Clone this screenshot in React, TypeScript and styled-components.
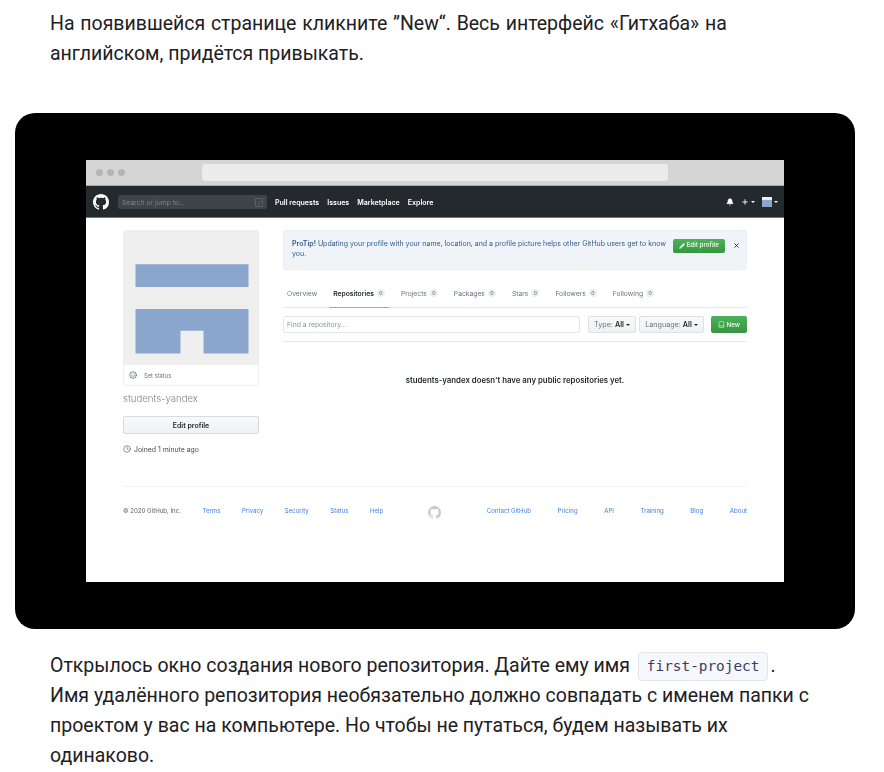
import React from "react";
import styled, { createGlobalStyle } from "styled-components";
import { Bell, Clock, Pencil, Plus, Smile, X, Book } from "lucide-react";

const Global = createGlobalStyle`
  html, body { margin: 0; background: #fff; }
  body { font-family: Roboto, "Noto Sans", sans-serif; color: #21201f; overflow: hidden; }
`;
const Page = styled.div`width: 884px; height: 772px; overflow: hidden; padding-top: 9px; box-sizing: border-box;`;
const Para = styled.p`
  margin: 0; padding: 0 50px; font-size: 19.5px; line-height: 30px; color: #21201f;
  font-family: Roboto, sans-serif; white-space: nowrap;
`;
const Lead = styled.span`word-spacing: 0.9px;`;
const Code = styled.code`
  display: inline-block; height: 29px; line-height: 27px; box-sizing: border-box; padding: 0 8px; margin: 0 2px 0 3px;
  font: 14.4px/27px "DejaVu Sans Mono", monospace; color: #3b3f5c; background: #f6f8fb;
  border: 1px solid #e0e5ee; border-radius: 4px; vertical-align: middle;
`;
const Card = styled.div`
  width: 840px; height: 516px; margin: 44px 0 22px 15px; background: #000; border-radius: 20px;
  padding: 47px 71px; box-sizing: border-box;
`;
const Shot = styled.div`
  width: 698px; height: 422px; background: #fff; overflow: hidden; filter: blur(0.5px);
  font-family: Inter, "Liberation Sans", sans-serif; font-size: 7px; color: #24292e;
`;
const Chrome = styled.div`
  height: 26px; box-sizing: border-box; background: #d5d5d5; border-bottom: 1px solid #a9a9a9;
  display: flex; align-items: center; padding: 0 0 0 9.5px;
`;
const Dots = styled.div`display: flex; gap: 3.5px; width: 106px;`;
const Dot = styled.span`width: 7.5px; height: 7.5px; border-radius: 50%; background: #b5b5b5;`;
const Url = styled.div`width: 466px; height: 17px; background: #ececec; border-radius: 3px;`;
const Nav = styled.div`
  height: 32px; box-sizing: border-box; background: #24292e; border-bottom: 1px solid #75787b;
  display: flex; align-items: center; padding: 1px 0 0 7px; color: #fff;
`;
const Logo = styled.svg`width: 16px; height: 16px; fill: ${(p: { $c: string }) => p.$c}; flex: none;`;
const Search = styled.div`
  width: 149px; height: 14px; margin-left: 9px; background: #3f4448; border-radius: 2px; box-sizing: border-box;
  display: flex; align-items: center; justify-content: space-between; padding: 0 4px; color: #7f8488; font-size: 6.8px;
`;
const Slash = styled.span`width: 8px; height: 9px; border: 1px solid #5c6165; border-radius: 1px; font-size: 5px; line-height: 8px; text-align: center; box-sizing: border-box;`;
const NavLinks = styled.div`display: flex; gap: 8px; margin-left: 8px; font-weight: 600; font-size: 7.05px; white-space: nowrap;`;
const NavRight = styled.div`margin-left: auto; display: flex; align-items: center; padding-right: 6px;`;
const Caret = styled.span`
  width: 0; height: 0; border: 2px solid transparent; border-top-color: ${(p: { $c?: string }) => p.$c || "#fff"}; border-bottom: 0;
  display: inline-block; margin-left: 2px; vertical-align: middle;
`;
const MiniAvatar = styled.span`
  width: 10px; height: 10px; margin-left: 7px; background: #8aa6cd; display: flex; flex-direction: column; justify-content: space-between;
  &::before { content: ""; height: 3px; background: #e9edf3; }
  &::after { content: ""; height: 1px; background: #8aa6cd; }
`;
const Body = styled.div`padding: 12px 37px 0; display: grid; grid-template-columns: 136px 464px; column-gap: 24px;`;
const Side = styled.div`display: flex; flex-direction: column; height: 256px;`;
const AvatarBox = styled.div`border: 1px solid #efefef; border-radius: 2px; overflow: hidden;`;
const Identicon = styled.svg`display: block; width: 134px; height: 134px;`;
const StatusRow = styled.div`height: 20px; display: flex; align-items: center; gap: 7px; padding-left: 5px; color: #6a737d; font-size: 5.8px; box-sizing: border-box;`;
const Username = styled.div`margin-top: 6px; font-size: 9.6px; line-height: 14px; font-weight: 300; color: #7d848b;`;
const EditBtn = styled.div`
  margin-top: 10px; height: 18px; border: 1px solid #d9dbde; border-radius: 2px; background: linear-gradient(#f8f9fa, #eff1f3);
  display: flex; align-items: center; justify-content: center; font-weight: 600; font-size: 7px; box-sizing: border-box;
`;
const Joined = styled.div`margin-top: 10.5px; display: flex; align-items: center; gap: 3px; font-size: 6.9px; color: #444d56;`;
const Main = styled.div`display: flex; flex-direction: column;`;
const Tip = styled.div`
  height: 39.5px; box-sizing: border-box; border: 1px solid #e7eff8; border-radius: 2px; background: #f0f4f9; color: #2f5a8c;
  padding: 7.5px 8px 0; display: flex; justify-content: space-between; line-height: 10.5px; font-size: 7px;
`;
const TipText = styled.div`width: 376px; flex: none; strong { font-weight: 600; }`;
const TipActions = styled.div`display: flex; align-items: flex-start; gap: 8px; color: #24292e;`;
const GreenBtn = styled.div`
  display: flex; align-items: center; justify-content: center; gap: 1.5px; color: #e4f5e6; font-weight: 600; font-size: 6.2px;
  background: linear-gradient(#4cb25a, #36963f); border-radius: 2px; box-sizing: border-box;
  width: ${(p: { $w: number; $h: number }) => p.$w}px; height: ${(p: { $w: number; $h: number }) => p.$h}px;
`;
const Tabs = styled.div`margin-top: 0; display: flex; gap: 8px; align-items: flex-end; border-bottom: 1px solid #e7e8ea; box-sizing: border-box; height: 38.5px;`;
const Tab = styled.div<{ $on?: boolean }>`
  height: 27px; padding: 0 4px 2px; box-sizing: border-box; display: flex; align-items: center; gap: 3px; margin-bottom: -1px;
  color: ${(p) => (p.$on ? "#24292e" : "#6a737d")}; font-weight: ${(p) => (p.$on ? 600 : 400)}; font-size: 6.75px;
  border-bottom: 1.5px solid ${(p) => (p.$on ? "#e2946b" : "transparent")}; white-space: nowrap;
`;
const Count = styled.span`min-width: 8px; height: 8px; border-radius: 4px; background: #eceef0; font-size: 5.2px; line-height: 8px; text-align: center; color: #586069; font-weight: 400;`;
const Filter = styled.div`
  height: 34px; display: flex; align-items: center; box-sizing: border-box; border-bottom: 1px solid #e7e8ea; padding-bottom: 0;
`;
const Find = styled.div`
  width: 297px; height: 17px; margin-right: 8px; box-sizing: border-box; border: 1px solid #e6e7e9; border-radius: 2px;
  color: #8d949b; font-size: 6.8px; line-height: 15px; padding-left: 3px;
`;
const Select = styled.div`
  width: ${(p: { $w: number }) => p.$w}px; height: 17px; box-sizing: border-box; border: 1px solid #dfe1e4; border-radius: 2px; margin-right: 3px;
  background: linear-gradient(#f8f9fa, #eff1f3); color: #6a737d; display: flex; align-items: center; justify-content: center; font-size: 7.2px; white-space: nowrap;
  b { color: #24292e; font-weight: 600; margin-left: 2px; }
`;
const NewWrap = styled.div`margin-left: 4px;`;
const Empty = styled.div`margin-top: 32px; text-align: center; font-weight: 600; font-size: 7.8px; line-height: 12px;`;
const Footer = styled.div`
  margin: 0 37px; border-top: 1px solid #f3f3f4; height: 50px; display: flex; align-items: center; justify-content: space-between;
  font-size: 6.1px; white-space: nowrap; padding-top: 1px; box-sizing: border-box;
`;
const FootGroup = styled.div`display: flex; gap: ${(p: { $g: number }) => p.$g}px; margin-top: -3px;`;
const Copy = styled.span`color: #586069;`;
const Link = styled.span`color: #3f83dd;`;

const GH = "M8 0C3.58 0 0 3.58 0 8c0 3.54 2.29 6.53 5.47 7.59.4.07.55-.17.55-.38 0-.19-.01-.82-.01-1.49-2.01.37-2.53-.49-2.69-.94-.09-.23-.48-.94-.82-1.13-.28-.15-.68-.52-.01-.53.63-.01 1.08.58 1.23.82.72 1.21 1.87.87 2.33.66.07-.52.28-.87.51-1.07-1.78-.2-3.64-.89-3.64-3.95 0-.87.31-1.59.82-2.15-.08-.2-.36-1.02.08-2.12 0 0 .67-.21 2.2.82.64-.18 1.32-.27 2-.27.68 0 1.36.09 2 .27 1.53-1.04 2.2-.82 2.2-.82.44 1.1.16 1.92.08 2.12.51.56.82 1.27.82 2.15 0 3.07-1.87 3.75-3.65 3.95.29.25.54.73.54 1.48 0 1.07-.01 1.93-.01 2.2 0 .21.15.46.55.38A8.013 8.013 0 0016 8c0-4.42-3.58-8-8-8z";

const tabs: [string, boolean][] = [["Repositories", true], ["Projects", false], ["Packages", false], ["Stars", false], ["Followers", false], ["Following", false]];

export default function App() {
  return (
    <Page>
      <Global />
      <Para><Lead>На появившейся странице кликните ”New“. Весь интерфейс «Гитхаба» на</Lead><br />английском, придётся привыкать.</Para>
      <Card>
        <Shot>
          <Chrome>
            <Dots><Dot /><Dot /><Dot /></Dots>
            <Url />
          </Chrome>
          <Nav>
            <Logo $c="#fff" viewBox="0 0 16 16"><path d={GH} /></Logo>
            <Search>Search or jump to...<Slash>/</Slash></Search>
            <NavLinks><span>Pull requests</span><span>Issues</span><span>Marketplace</span><span>Explore</span></NavLinks>
            <NavRight>
              <Bell size={8} fill="#fff" strokeWidth={1.5} />
              <Plus size={8} strokeWidth={2.6} style={{ marginLeft: 7 }} />
              <Caret />
              <MiniAvatar />
              <Caret />
            </NavRight>
          </Nav>
          <Body>
            <Side>
              <AvatarBox>
                <Identicon viewBox="0 0 134 135" preserveAspectRatio="none">
                  <rect width="134" height="135" fill="#efefef" />
                  <path d="M11.5 33.5h113v23h-113zM11.5 78.5h113v45h-45v-23h-23v23h-45z" fill="#8aa6cd" />
                </Identicon>
                <StatusRow><Smile size={8} color="#444d56" />Set status</StatusRow>
              </AvatarBox>
              <Username>students-yandex</Username>
              <EditBtn>Edit profile</EditBtn>
              <Joined><Clock size={8} color="#586069" />Joined 1 minute ago</Joined>
            </Side>
            <Main>
              <Tip>
                <TipText><strong>ProTip!</strong> Updating your profile with your name, location, and a profile picture helps other GitHub users get to know you.</TipText>
                <TipActions>
                  <GreenBtn $w={52} $h={14}><Pencil size={6} fill="#e4f5e6" />Edit profile</GreenBtn>
                  <X size={7} strokeWidth={3} style={{ marginTop: 3, marginRight: -2 }} />
                </TipActions>
              </Tip>
              <Tabs>
                <Tab>Overview</Tab>
                {tabs.map(([t, on]) => (
                  <Tab key={t} $on={on}>{t}<Count>0</Count></Tab>
                ))}
              </Tabs>
              <Filter>
                <Find>Find a repository...</Find>
                <Select $w={48}>Type:<b>All</b><Caret $c="#24292e" /></Select>
                <Select $w={65}>Language:<b>All</b><Caret $c="#24292e" /></Select>
                <NewWrap><GreenBtn $w={36} $h={17}><Book size={7} />New</GreenBtn></NewWrap>
              </Filter>
              <Empty>students-yandex doesn't have any public repositories yet.</Empty>
            </Main>
          </Body>
          <Footer>
            <FootGroup $g={21.5}>
              <Copy>© 2020 GitHub, Inc.</Copy>
              <Link>Terms</Link><Link>Privacy</Link><Link>Security</Link><Link>Status</Link><Link>Help</Link>
            </FootGroup>
            <Logo $c="#c6cbd1" viewBox="0 0 16 16" style={{ width: 13, height: 13 }}><path d={GH} /></Logo>
            <FootGroup $g={26.6}>
              <Link>Contact GitHub</Link><Link>Pricing</Link><Link>API</Link><Link>Training</Link><Link>Blog</Link><Link>About</Link>
            </FootGroup>
          </Footer>
        </Shot>
      </Card>
      <Para>
        Открылось окно создания нового репозитория. Дайте ему имя <Code>first-project</Code>.<br />
        Имя удалённого репозитория необязательно должно совпадать с именем папки с<br />
        проектом у вас на компьютере. Но чтобы не путаться, будем называть их<br />
        одинаково.
      </Para>
    </Page>
  );
}
